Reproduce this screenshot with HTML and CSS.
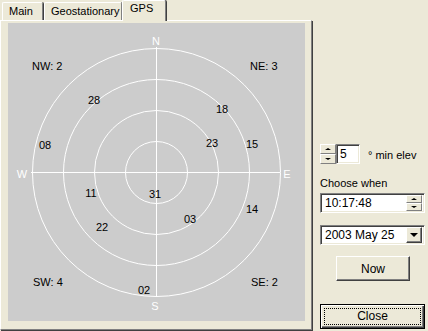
FILE: index.html
```html
<!DOCTYPE html>
<html lang="en">

<head>
   <meta charset="UTF-8">
   <meta name="viewport" content="width=device-width, initial-scale=1.0">
   <title>GPS</title>
   <link rel="stylesheet" href="styles.css">
</head>

<body>
   <div class="window">
      <div class="left">
         <div class="tabs">
            <div class="tab tab-main">Main</div>
            <div class="tab tab-geo">Geostationary</div>
            <div class="tab tab-gps active">GPS</div>
         </div>
         <div class="panel">
            <div class="sky">
               <svg width="297" height="298" viewBox="0 0 297 298">
                  <g class="grid">
                     <circle cx="148.5" cy="149.5" r="31" />
                     <circle cx="148.5" cy="149.5" r="62" />
                     <circle cx="148.5" cy="149.5" r="93" />
                     <circle cx="148.5" cy="149.5" r="124" />
                     <line x1="23" y1="149.5" x2="272" y2="149.5" />
                     <line x1="148.5" y1="24" x2="148.5" y2="274" />
                  </g>
                  <g class="compass">
                     <text x="148" y="18">N</text>
                     <text x="14" y="151">W</text>
                     <text x="279" y="151">E</text>
                     <text x="147" y="283">S</text>
                  </g>
                  <g class="quad">
                     <text x="24" y="43">NW: 2</text>
                     <text x="242" y="43">NE: 3</text>
                     <text x="25" y="259">SW: 4</text>
                     <text x="243" y="259">SE: 2</text>
                  </g>
                  <g class="sats">
                     <text x="86" y="77">28</text>
                     <text x="214" y="86">18</text>
                     <text x="37" y="122">08</text>
                     <text x="204" y="120">23</text>
                     <text x="244" y="121">15</text>
                     <text x="83" y="170">11</text>
                     <text x="147" y="171">31</text>
                     <text x="182" y="196">03</text>
                     <text x="244" y="186">14</text>
                     <text x="94" y="204">22</text>
                     <text x="136" y="267">02</text>
                  </g>
               </svg>
            </div>
         </div>
      </div>

      <div class="side">
         <div class="elev-row">
            <div class="spin">
               <div class="spin-btn"><span class="up"></span></div>
               <div class="spin-btn"><span class="down"></span></div>
            </div>
            <div class="field elev-field">5</div>
            <span class="elev-label">° min elev</span>
         </div>

         <p class="choose">Choose when</p>

         <div class="field wide time-field">
            <span class="value">10:17:48</span>
            <div class="spin small">
               <div class="spin-btn"><span class="up"></span></div>
               <div class="spin-btn"><span class="down"></span></div>
            </div>
         </div>

         <div class="field wide date-field">
            <span class="value">2003 May 25</span>
            <div class="drop-btn"><span class="drop"></span></div>
         </div>

         <button class="btn now-btn">Now</button>
         <button class="btn close-btn"><span class="focus">Close</span></button>
      </div>
   </div>
</body>

</html>
```

FILE: styles.css
```css
* {
   margin: 0;
   padding: 0;
   box-sizing: border-box;
   font-family: 'Liberation Sans', Arial, sans-serif;
}

body {
   background-color: #ece9d8;
   font-size: 11px;
   color: #000;
}

.window {
   display: flex;
   width: 428px;
   height: 331px;
}

.left {
   width: 313px;
   display: flex;
   flex-direction: column;
}

/* tabs */

.tabs {
   display: flex;
   align-items: flex-end;
   height: 20px;
   padding-left: 2px;
}

.tab {
   height: 18px;
   line-height: 16px;
   padding-left: 6px;
   border-top: 1px solid #fff;
   border-left: 1px solid #fff;
   border-right: 1px solid #808080;
   box-shadow: 1px 0 0 #404040;
   border-radius: 2px 2px 0 0;
   margin-right: 1px;
   font-size: 11px;
}

.tab-main {
   width: 41px;
}

.tab-geo {
   width: 78px;
}

.tab-gps {
   width: 44px;
}

.tab.active {
   position: relative;
   z-index: 1;
   height: 21px;
   line-height: 14px;
   margin-left: -1px;
   margin-bottom: -1px;
   padding-left: 7px;
   background-color: #ece9d8;
}

.panel {
   flex: 1;
   border-top: 1px solid #fff;
   border-left: 1px solid #fff;
   border-right: 1px solid #808080;
   border-bottom: 1px solid #808080;
   box-shadow: 1px 1px 0 #404040;
   margin-right: 1px;
   margin-bottom: 1px;
   padding: 2px 6px 0 7px;
}

.sky {
   width: 297px;
   height: 298px;
   background-color: #cccccc;
}

.sky svg {
   display: block;
}

.grid circle,
.grid line {
   fill: none;
   stroke: #fff;
   stroke-width: 1;
}

.sky text {
   font-family: 'Liberation Sans', Arial, sans-serif;
   font-size: 11px;
   dominant-baseline: central;
}

.compass text {
   fill: #fff;
   text-anchor: middle;
}

.quad text {
   fill: #000;
}

.sats text {
   fill: #000;
   text-anchor: middle;
}

/* right column */

.side {
   flex: 1;
   padding: 144px 0 0 7px;
   display: flex;
   flex-direction: column;
   align-items: flex-start;
}

.elev-row {
   display: flex;
   align-items: center;
   height: 20px;
}

.spin {
   display: flex;
   flex-direction: column;
   width: 16px;
   height: 20px;
}

.spin-btn {
   flex: 1;
   display: flex;
   align-items: center;
   justify-content: center;
   background-color: #ece9d8;
   border-top: 1px solid #fff;
   border-left: 1px solid #fff;
   border-right: 1px solid #808080;
   border-bottom: 1px solid #808080;
}

.up,
.down,
.drop {
   width: 0;
   height: 0;
   border-left: 3px solid transparent;
   border-right: 3px solid transparent;
}

.up {
   border-bottom: 2px solid #000;
}

.down {
   border-top: 2px solid #000;
}

.field {
   background-color: #fff;
   height: 20px;
   border-top: 1px solid #808080;
   border-left: 1px solid #808080;
   border-right: 1px solid #fff;
   border-bottom: 1px solid #fff;
   box-shadow: inset 1px 1px 0 #404040, inset -1px -1px 0 #ece9d8;
   line-height: 18px;
}

.elev-field {
   width: 24px;
   padding-left: 3px;
   font-size: 12px;
}

.elev-label {
   margin-left: 8px;
   margin-top: 1px;
   font-size: 11px;
}

.choose {
   margin-top: 13px;
   line-height: 13px;
   font-size: 11px;
}

.wide {
   width: 105px;
   display: flex;
   align-items: center;
   justify-content: space-between;
   padding: 0 2px 0 4px;
}

.time-field {
   margin-top: 3px;
}

.value {
   font-size: 12px;
}

.spin.small {
   width: 16px;
   height: 16px;
}

.date-field {
   margin-top: 12px;
   padding-right: 2px;
}

.drop-btn {
   width: 16px;
   height: 16px;
   display: flex;
   align-items: center;
   justify-content: center;
   background-color: #ece9d8;
   border-top: 1px solid #fff;
   border-left: 1px solid #fff;
   border-right: 1px solid #404040;
   border-bottom: 1px solid #404040;
   box-shadow: inset -1px -1px 0 #808080;
}

.drop {
   border-left-width: 4px;
   border-right-width: 4px;
   border-top: 4px solid #000;
}

.btn {
   background-color: #ece9d8;
   font-size: 12px;
   border-top: 1px solid #fff;
   border-left: 1px solid #fff;
   border-right: 1px solid #404040;
   border-bottom: 1px solid #404040;
   box-shadow: inset -1px -1px 0 #808080;
   color: #000;
}

.now-btn {
   width: 74px;
   height: 25px;
   margin: 11px 0 0 16px;
}

.close-btn {
   width: 105px;
   height: 25px;
   margin-top: 23px;
   border: 1px solid #000;
   box-shadow: inset 1px 1px 0 #fff, inset -1px -1px 0 #404040, inset -2px -2px 0 #808080;
   padding: 3px;
   display: flex;
}

.focus {
   flex: 1;
   border: 1px dotted #000;
   line-height: 15px;
   text-align: center;
}
```
